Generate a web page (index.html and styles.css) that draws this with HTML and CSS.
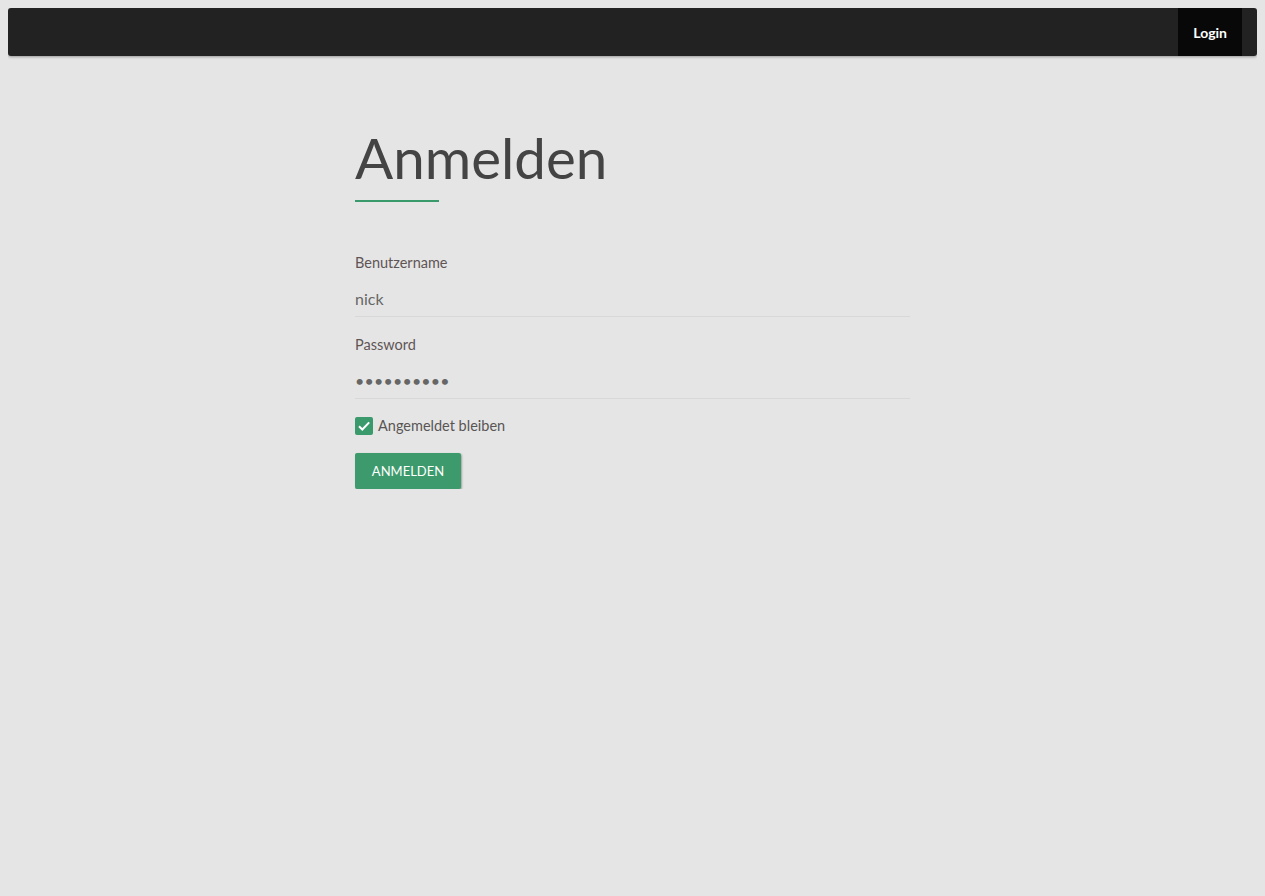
FILE: index.html
```html
<!DOCTYPE html>
<html lang="de">
<head>
<meta charset="utf-8">
<title>Anmelden</title>
<link rel="stylesheet" href="styles.css">
</head>
<body>
<nav class="navbar">
  <div class="nav-spacer"></div>
  <a class="nav-item active" href="#">Login</a>
</nav>
<main class="container">
  <h1 class="title">Anmelden</h1>
  <div class="title-line"></div>
  <form class="form">
    <div class="field">
      <label class="label">Benutzername</label>
      <input class="input" type="text" value="nick">
    </div>
    <div class="field">
      <label class="label">Password</label>
      <input class="input pw" type="password" value="nicknickni">
    </div>
    <label class="check">
      <span class="box"><svg viewBox="0 0 18 18" width="18" height="18"><path d="M4 9.2l3.3 3.3L14.2 5.4" fill="none" stroke="#fff" stroke-width="2"/></svg></span>
      <span class="check-text">Angemeldet bleiben</span>
    </label>
    <button class="btn" type="button">ANMELDEN</button>
  </form>
</main>
</body>
</html>
```

FILE: styles.css
```css
html, body {
  background: #e5e5e5;
}
body {
  margin: 8px;
  font-family: Lato, "Open Sans", sans-serif;
  color: #555;
}
.navbar {
  height: 48px;
  background: #222;
  border-radius: 3px;
  box-shadow: 0 1px 3px rgba(0,0,0,0.35);
  display: flex;
  padding-right: 15px;
}
.nav-spacer { flex: 1; }
.nav-item {
  background: #080808;
  color: #fff;
  font-weight: bold;
  font-size: 14px;
  text-decoration: none;
  display: flex;
  align-items: center;
  padding: 0 15px;
}
.container {
  width: 555px;
  margin: 0 auto;
  padding-top: 66px;
}
.title {
  margin: 0;
  font-size: 56.5px;
  font-weight: normal;
  color: #444;
  line-height: 70px;
}
.title-line {
  width: 84px;
  height: 2px;
  background: #3a9a6c;
  margin-top: 8px;
}
.form {
  margin-top: 51px;
}
.field {
  display: flex;
  flex-direction: column;
  margin-bottom: 18px;
}
.label {
  font-size: 14.5px;
  color: #5f5555;
  line-height: 20px;
}
.input {
  margin-top: 8px;
  border: none;
  border-bottom: 1px solid #d8d8d8;
  background: transparent;
  font-family: Lato, sans-serif;
  font-size: 16px;
  color: #666;
  padding: 0;
  height: 36px;
  box-sizing: border-box;
  outline: none;
}
.pw {
  letter-spacing: 0.2px;
}
.check {
  display: flex;
  align-items: center;
  gap: 5px;
  margin-top: 2px;
  font-size: 14.5px;
  line-height: 18px;
  color: #5a5555;
}
.box {
  width: 18px;
  height: 18px;
  background: #3a9a6c;
  border-radius: 2px;
  display: flex;
}
.btn {
  display: block;
  margin-top: 18px;
  background: #3c9a6c;
  color: #fff;
  border: none;
  border-radius: 2px;
  height: 36px;
  width: 106px;
  font-family: Lato, sans-serif;
  font-size: 13px;
  box-shadow: 1px 1px 2px rgba(0,0,0,0.3);
  padding: 0;
}
```
